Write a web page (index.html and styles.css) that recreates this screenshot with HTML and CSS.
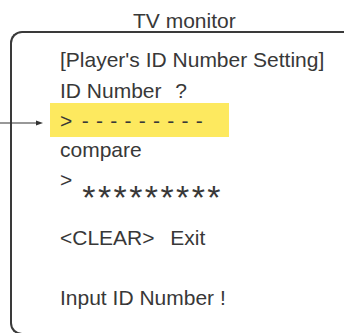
FILE: index.html
```html
<!DOCTYPE html>
<html lang="en">
<head>
    <meta charset="UTF-8">
    <meta name="viewport" content="width=device-width, initial-scale=1.0">
    <title>TV monitor</title>
    <link rel="stylesheet" href="styles.css">
</head>
<body>

    <div class="caption">TV monitor</div>

    <!-- pointer to the input row -->
    <svg class="pointer" width="44" height="8" viewBox="0 0 44 8">
        <line x1="0" y1="4" x2="37" y2="4" stroke="#333" stroke-width="1.2"/>
        <polygon points="36,1.5 43,4 36,6.5" fill="#333"/>
    </svg>

    <div class="monitor">
        <div class="row title">[Player's ID Number Setting]</div>
        <div class="row prompt">ID Number&nbsp;&nbsp;<span class="ask">?</span></div>
        <div class="row entry">
            <span>&gt;</span><span class="dashes">---------</span>
        </div>
        <div class="row compare">compare</div>
        <div class="row secret">
            <span class="gt">&gt;</span>
            <span class="stars">*********</span>
        </div>
        <div class="row clear">&lt;CLEAR&gt;&nbsp;&nbsp;<span class="exit">Exit</span></div>
        <div class="row hint">Input ID Number !</div>
    </div>

</body>
</html>
```

FILE: styles.css
```css
html, body {
    overflow: hidden;
}
body {
    margin: 0;
    font-family: "Liberation Sans", Arial, sans-serif;
    font-size: 21px;
    color: #383838;
    background: #fff;
}
.caption {
    box-sizing: border-box;
    height: 31px;
    padding: 10px 0 0 133px;
    line-height: 21px;
}
.pointer {
    position: absolute;
    left: 0;
    top: 119px;
}
.monitor {
    box-sizing: border-box;
    height: 304px;
    margin-left: 10px;
    padding: 12px 0 0 48px;
    border: 2px solid #3a3a3a;
    border-right: none;
    border-radius: 12px 0 0 12px;
}
.row {
    white-space: nowrap;
}
.title {
    height: 33px;
    line-height: 30px;
}
.prompt {
    height: 25px;
    line-height: 25px;
}
.ask {
    margin-left: 2px;
}
.entry {
    box-sizing: border-box;
    width: 179px;
    height: 34px;
    margin-left: -10px;
    padding: 2px 0 0 10px;
    line-height: 32px;
    background: #fde95f;
}
.dashes {
    margin-left: 9.5px;
    letter-spacing: 7.25px;
}
.compare {
    line-height: 26px;
}
.secret {
    display: flex;
    align-items: flex-start;
    height: 60px;
}
.gt {
    line-height: 34px;
}
.stars {
    margin: 17px 0 0 10px;
    font-size: 34px;
    line-height: 34px;
    letter-spacing: 2.4px;
}
.clear {
    line-height: 30px;
}
.exit {
    margin-left: 4px;
}
.hint {
    margin-top: 30px;
    line-height: 30px;
}
```
